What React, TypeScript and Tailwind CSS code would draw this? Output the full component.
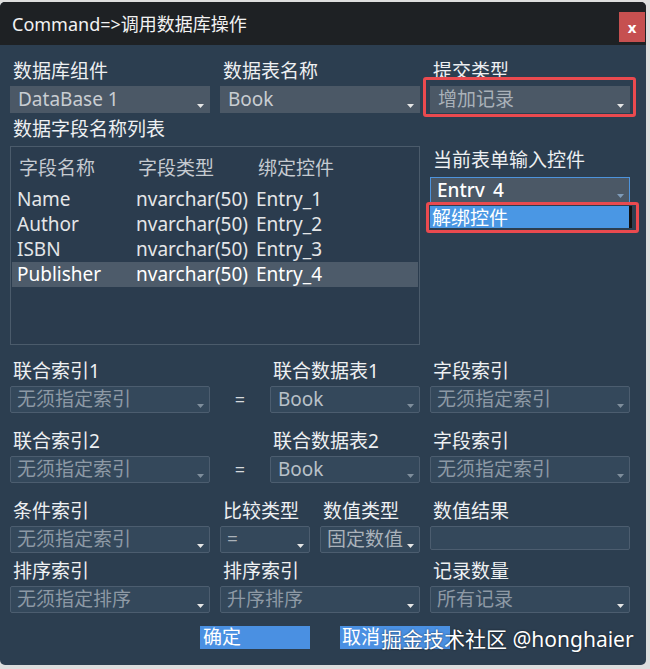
import React from "react";

const Arrow = ({ c = "#e6e6e6" }: { c?: string }) => (
  <svg width="7" height="4" viewBox="0 0 7 4" className="shrink-0">
    <path d="M0 0h7L3.5 4z" fill={c} />
  </svg>
);

function Label({ children, className = "" }: { children?: React.ReactNode; className?: string }) {
  return (
    <div className={"h-[24px] leading-[24px] text-[19px] text-[#eef0f2] pl-[3px] whitespace-nowrap " + className}>
      {children}
    </div>
  );
}

function Solid({ text, textCls, w }: { text: string; textCls: string; w: string }) {
  return (
    <div className={"h-[27px] bg-[#4b5866] flex items-end overflow-hidden " + w}>
      <div className={"flex-1 h-[27px] leading-[27px] pl-[8px] text-[19px] whitespace-nowrap overflow-hidden " + textCls}>
        {text}
      </div>
      <div className="mb-[5px] mr-[6px]">
        <Arrow />
      </div>
    </div>
  );
}

function Outline({ text, textCls, w, arrowC = "#7f8e9c", arrow = true }: { text: string; textCls: string; w: string; arrowC?: string; arrow?: boolean }) {
  return (
    <div className={"h-[27px] bg-[#34485b] border border-[#4c5d6f] rounded-[2px] flex items-end overflow-hidden " + w}>
      <div className={"flex-1 h-[25px] leading-[25px] pl-[6px] text-[19px] whitespace-nowrap overflow-hidden " + textCls}>
        {text}
      </div>
      {arrow && (
        <div className="mb-[4px] mr-[5px]">
          <Arrow c={arrowC} />
        </div>
      )}
    </div>
  );
}

const rows = [
  ["Name", "nvarchar(50)", "Entry_1"],
  ["Author", "nvarchar(50)", "Entry_2"],
  ["ISBN", "nvarchar(50)", "Entry_3"],
  ["Publisher", "nvarchar(50)", "Entry_4"],
];

export default function App() {
  return (
    <div className="w-[650px] h-[669px] bg-[#dedede] pt-[2px] font-['Noto_Sans','Noto_Sans_CJK_SC',sans-serif]">
      <div className="relative w-[646px] h-[663px] bg-[#2c3e50] rounded-[5px] overflow-hidden flex flex-col">
        {/* title bar */}
        <div className="h-[43px] shrink-0 bg-[#1e2124] flex items-start pl-[12px] pr-[1px]">
          <div className="flex-1 mt-[10px] h-[24px] leading-[24px] text-[18px] text-[#f2f2f2]">
            Command=&gt;调用数据库操作
          </div>
          <div className="mt-[10px] w-[26px] h-[30px] bg-[#c65050] flex items-center justify-center text-white text-[15px] font-bold leading-none">
            x
          </div>
        </div>

        <div className="px-[10px] flex flex-col">
          {/* top section */}
          <div className="flex gap-[10px] mt-[14px]">
            <div className="w-[410px] flex flex-col">
              <div className="flex gap-[10px]">
                <div className="w-[200px]">
                  <Label>数据库组件</Label>
                  <div className="mt-[3px]">
                    <Solid w="w-[200px]" text="DataBase 1" textCls="text-[#c9cdd2] text-[18px]" />
                  </div>
                </div>
                <div className="w-[200px]">
                  <Label>数据表名称</Label>
                  <div className="mt-[3px]">
                    <Solid w="w-[200px]" text="Book" textCls="text-[#c9cdd2] text-[18px]" />
                  </div>
                </div>
              </div>
              <Label className="mt-[4px]">数据字段名称列表</Label>
              <div className="mt-[5px] h-[199px] border border-[#4b5b6b] bg-[#2b3c4e] pt-[9px] px-[1px] flex flex-col">
                <div className="h-[24px] leading-[24px] flex text-[19px] text-[#c5cad0]">
                  <div className="w-[126px] pl-[7px]">字段名称</div>
                  <div className="w-[120px]">字段类型</div>
                  <div className="flex-1">绑定控件</div>
                </div>
                <div className="mt-[7px] flex flex-col">
                  {rows.map((r, i) => (
                    <div
                      key={r[0]}
                      className={
                        "h-[25px] leading-[25px] flex text-[19px] " +
                        (i === 3 ? "bg-[#4d5b6a] text-white" : "text-[#e4e6e8]")
                      }
                    >
                      <div className="w-[124px] pl-[5px]">{r[0]}</div>
                      <div className="w-[120px]">{r[1]}</div>
                      <div className="flex-1">{r[2]}</div>
                    </div>
                  ))}
                </div>
              </div>
            </div>

            <div className="w-[200px] flex flex-col">
              <Label>提交类型</Label>
              <div className="mt-[3px]">
                <Solid w="w-[200px]" text="增加记录" textCls="text-[#a9b1b9]" />
              </div>
              <Label className="mt-[35px]">当前表单输入控件</Label>
              <div className="mt-[5px] h-[26px] bg-[#4b5866] border-[1.5px] border-[#4d93dc] flex items-end">
                <div className="flex-1 h-[19px] self-start overflow-hidden">
                  <div className="h-[26px] leading-[24px] pl-[6px] text-[19px] font-medium text-white">Entry_4</div>
                </div>
                <div className="mb-[4px] mr-[5px]">
                  <Arrow c="#7f9bb8" />
                </div>
              </div>
              <div className="mt-[3px] w-[202px] h-[22px] bg-[#4a97e4] border-r-[3px] border-[#111] leading-[25px] text-[19px] text-white pl-[2px] overflow-hidden whitespace-nowrap">
                解绑控件
              </div>
            </div>
          </div>

          {/* join rows */}
          {[1, 2].map((n) => (
            <div key={n} className={"flex " + (n === 1 ? "mt-[14px]" : "mt-[16px]")}>
              <div className="w-[200px]">
                <Label>{"联合索引" + n}</Label>
                <div className="mt-[3px]">
                  <Outline w="w-[200px]" text="无须指定索引" textCls="text-[#8d99a5]" />
                </div>
              </div>
              <div className="w-[60px] pt-[27px]">
                <div className="h-[27px] leading-[27px] text-center text-[18px] text-[#d6dade]">=</div>
              </div>
              <div className="w-[150px]">
                <Label>{"联合数据表" + n}</Label>
                <div className="mt-[3px]">
                  <Outline w="w-[150px]" text="Book" textCls="text-[#b9c1c9] text-[18px] pl-[7px]" />
                </div>
              </div>
              <div className="w-[200px] ml-[10px]">
                <Label>字段索引</Label>
                <div className="mt-[3px]">
                  <Outline w="w-[200px]" text="无须指定索引" textCls="text-[#8d99a5]" />
                </div>
              </div>
            </div>
          ))}

          {/* condition row */}
          <div className="flex gap-[10px] mt-[16px]">
            <div className="w-[200px]">
              <Label>条件索引</Label>
              <div className="mt-[3px]">
                <Outline w="w-[200px]" text="无须指定索引" textCls="text-[#8d99a5]" arrowC="#e6e6e6" />
              </div>
            </div>
            <div className="w-[90px]">
              <Label>比较类型</Label>
              <div className="mt-[3px]">
                <Outline w="w-[90px]" text="=" textCls="text-[#aab2ba] text-[18px]" arrowC="#e6e6e6" />
              </div>
            </div>
            <div className="w-[100px]">
              <Label>数值类型</Label>
              <div className="mt-[3px]">
                <Outline w="w-[100px]" text="固定数值" textCls="text-[#aab2ba]" arrowC="#e6e6e6" />
              </div>
            </div>
            <div className="w-[200px]">
              <Label>数值结果</Label>
              <div className="mt-[3px] h-[24px] w-[200px] bg-[#34485b] border border-[#4c5d6f] rounded-[2px]" />
            </div>
          </div>

          {/* sort row */}
          <div className="flex gap-[10px] mt-[6px]">
            <div className="w-[200px]">
              <Label>排序索引</Label>
              <div className="mt-[3px]">
                <Outline w="w-[200px]" text="无须指定排序" textCls="text-[#8d99a5]" arrowC="#e6e6e6" />
              </div>
            </div>
            <div className="w-[200px]">
              <Label>排序索引</Label>
              <div className="mt-[3px]">
                <Outline w="w-[200px]" text="升序排序" textCls="text-[#8d99a5]" arrowC="#e6e6e6" />
              </div>
            </div>
            <div className="w-[200px]">
              <Label>记录数量</Label>
              <div className="mt-[3px]">
                <Outline w="w-[200px]" text="所有记录" textCls="text-[#8d99a5]" arrowC="#e6e6e6" />
              </div>
            </div>
          </div>

          {/* buttons */}
          <div className="flex mt-[13px]">
            <div className="ml-[190px] w-[110px] h-[23px] bg-[#4a90e2] text-white text-[19px] leading-[23px] pl-[3px]">确定</div>
            <div className="ml-[30px] w-[110px] h-[23px] bg-[#4a90e2] text-white text-[19px] leading-[23px] pl-[2px]">取消</div>
          </div>
        </div>

        {/* annotation overlays */}
        <div className="absolute left-[423px] top-[75px] w-[213px] h-[40px] border-[3px] border-[#ea4a4f] rounded-[3px]" />
        <div className="absolute left-[426px] top-[200px] w-[213px] h-[31px] border-[3px] border-[#ea4a4f] rounded-[3px]" />
        <div className="absolute left-[381px] top-[624px] text-[21px] leading-[26px] text-white whitespace-nowrap [text-shadow:0_0_2px_rgba(0,0,0,0.7)]">
          掘金技术社区 @honghaier
        </div>
      </div>
    </div>
  );
}
